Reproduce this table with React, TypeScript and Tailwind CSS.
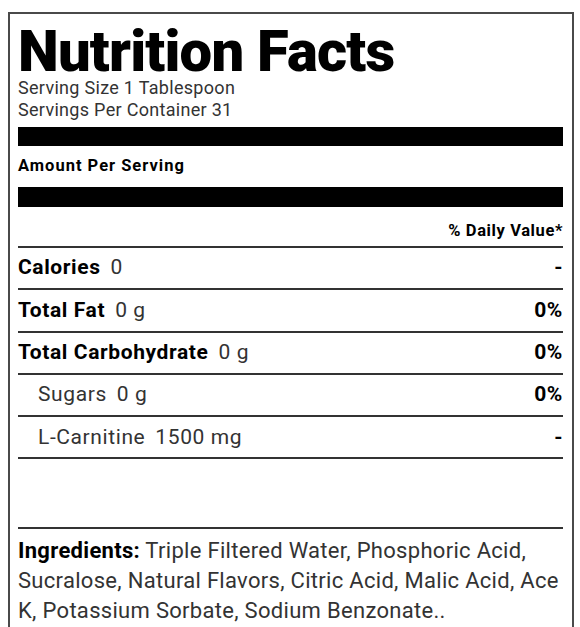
import React from 'react';

type Row = { label: string; amount: string; dv: string; sub?: boolean };

const rows: Row[] = [
  { label: 'Calories', amount: '0', dv: '-' },
  { label: 'Total Fat', amount: '0 g', dv: '0%' },
  { label: 'Total Carbohydrate', amount: '0 g', dv: '0%' },
  { label: 'Sugars', amount: '0 g', dv: '0%', sub: true },
  { label: 'L-Carnitine', amount: '1500 mg', dv: '-', sub: true },
];

const App: React.FC = () => {
  return (
    <div className="w-[580px] h-[627px] overflow-hidden bg-white font-['Roboto',sans-serif]">
      <div className="ml-2 mt-3 w-[566px] h-[640px] border-2 border-[#4a4a4a] pl-2 pr-[9px] pt-[11px]">
        <h1 className="text-[58px] leading-[52px] font-black text-black tracking-[-0.8px]">
          Nutrition Facts
        </h1>
        <div className="text-[18px] leading-[22px] tracking-[0.3px] text-[#333]">
          <p>Serving Size 1 Tablespoon</p>
          <p>Servings Per Container 31</p>
        </div>
        <div className="mt-[6px] h-[19px] bg-black" />
        <p className="pt-[9px] pb-[10px] text-[16.5px] leading-[22px] tracking-[1px] font-bold text-black">
          Amount Per Serving
        </p>
        <div className="h-[20px] bg-black" />
        <p className="pt-[14px] pb-[6px] text-right text-[16.5px] leading-[19px] tracking-[0.6px] font-bold text-black">
          % Daily Value*
        </p>
        <div className="border-t-2 border-[#333]">
          {rows.map((r) => (
            <div
              key={r.label}
              className="flex items-center justify-between h-[42.3px] border-b-2 border-[#333] text-[21px] tracking-[0.6px]"
            >
              <span className={r.sub ? 'pl-5' : ''}>
                <span className={r.sub ? 'text-[#333]' : 'font-bold text-black'}>{r.label}</span>
                <span className="ml-[10px] text-[#333]">{r.amount}</span>
              </span>
              <span className="font-bold text-black">{r.dv}</span>
            </div>
          ))}
        </div>
        <div className="mt-[68px] border-t-2 border-[#333] pt-[7px] text-[22px] leading-[30px] tracking-[0.3px] text-[#333]">
          <span className="font-bold text-black">Ingredients:</span> Triple Filtered Water, Phosphoric Acid,
          Sucralose, Natural Flavors, Citric Acid, Malic Acid, Ace K, Potassium Sorbate, Sodium Benzonate..
        </div>
      </div>
    </div>
  );
};

export default App;
